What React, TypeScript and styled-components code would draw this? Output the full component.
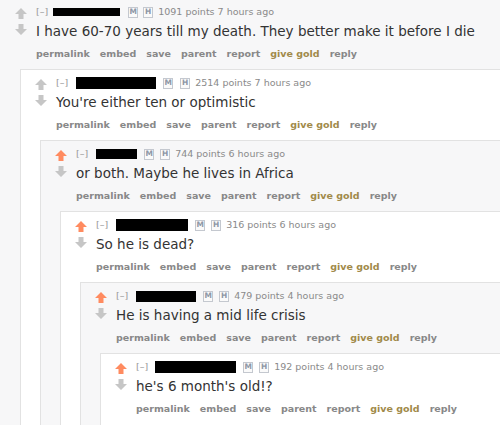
import React from 'react';
import styled, { createGlobalStyle } from 'styled-components';

const GlobalStyle = createGlobalStyle`
  html, body { margin: 0; padding: 0; background: #f7f7f8; overflow: hidden; }
  body { font-family: "DejaVu Sans", Verdana, sans-serif; }
`;

const Page = styled.div`
  width: 500px;
  height: 425px;
  overflow: hidden;
  background: #f7f7f8;
`;

const Box = styled.div<{ $depth: number }>`
  background: ${p => (p.$depth % 2 ? '#ffffff' : '#f7f7f8')};
  border: 1px solid #e2e2e2;
  border-right: none;
  border-left-color: ${p => (p.$depth === 0 ? 'transparent' : '#e2e2e2')};
  margin: ${p => (p.$depth === 0 ? '-2px 0 0 0' : '0 0 0 19px')};
  padding-bottom: 3px;
`;

const Entry = styled.div`
  display: flex;
  height: 70px;
`;

const ArrowCol = styled.div`
  width: 30px;
  padding-left: 5px;
  padding-top: 9px;
  display: flex;
  flex-direction: column;
  align-items: center;
  gap: 5px;
  flex: none;
`;

const Content = styled.div`
  display: flex;
  flex-direction: column;
  min-width: 0;
`;

const Tagline = styled.div`
  margin-top: 6px;
  height: 14px;
  line-height: 14px;
  display: flex;
  align-items: center;
  font-size: 9.5px;
  color: #8a8a8a;
  white-space: nowrap;
`;

const Expand = styled.span`
  color: #999;
`;

const Redact = styled.span<{ $w: number; $h: number; $ml: number }>`
  display: inline-block;
  background: #000;
  width: ${p => p.$w}px;
  height: ${p => p.$h}px;
  margin-left: ${p => p.$ml}px;
`;

const Badge = styled.span<{ $ml: number }>`
  box-sizing: border-box;
  display: inline-flex;
  align-items: center;
  justify-content: center;
  width: 10px;
  height: 11px;
  border: 1px solid #c4c8cf;
  background: #fafafa;
  color: #8e97a6;
  font-size: 7.5px;
  font-weight: bold;
  margin-left: ${p => p.$ml}px;
`;

const Points = styled.span`
  margin-left: 5px;
`;

const Body = styled.div`
  margin-top: 2px;
  height: 20px;
  line-height: 20px;
  font-size: 13.5px;
  color: #333;
  white-space: nowrap;
`;

const Buttons = styled.ul`
  list-style: none;
  margin: 7px 0 0 0;
  padding: 0;
  display: flex;
  gap: 10px;
  height: 12px;
  line-height: 12px;
  font-size: 9.5px;
  font-weight: bold;
  color: #888;
  white-space: nowrap;
`;

const Btn = styled.li<{ $gold?: boolean }>`
  color: ${p => (p.$gold ? '#a18a4a' : '#888')};
`;

const Arrow = ({ color, down }: { color: string; down?: boolean }) => (
  <svg width="12" height="11" viewBox="0 0 12 11" style={down ? { transform: 'rotate(180deg)' } : undefined}>
    <path d="M6 0 L12 6 L8.5 6 L8.5 11 L3.5 11 L3.5 6 L0 6 Z" fill={color} />
  </svg>
);

type C = {
  bar: [number, number, number];
  m: [number, number];
  points: number;
  time: string;
  text: string;
  up: boolean;
};

const comments: C[] = [
  { bar: [5, 67, 8], m: [8, 5], points: 1091, time: '7 hours ago', text: 'I have 60-70 years till my death. They better make it before I die', up: false },
  { bar: [8, 80, 12], m: [7, 7], points: 2514, time: '7 hours ago', text: "You're either ten or optimistic", up: false },
  { bar: [8, 41, 10], m: [7, 6], points: 744, time: '6 hours ago', text: 'or both. Maybe he lives in Africa', up: true },
  { bar: [8, 72, 12], m: [7, 6], points: 316, time: '6 hours ago', text: 'So he is dead?', up: true },
  { bar: [8, 60, 11], m: [7, 6], points: 479, time: '4 hours ago', text: 'He is having a mid life crisis', up: true },
  { bar: [7, 81, 12], m: [7, 6], points: 192, time: '4 hours ago', text: "he's 6 month's old!?", up: true },
];

const buttons = ['permalink', 'embed', 'save', 'parent', 'report', 'give gold', 'reply'];

const Comment = ({ depth }: { depth: number }) => {
  const c = comments[depth];
  if (!c) return null;
  return (
    <Box $depth={depth}>
      <Entry>
        <ArrowCol>
          <Arrow color={c.up ? '#ff8b60' : '#c6c6c6'} />
          <Arrow color="#c6c6c6" down />
        </ArrowCol>
        <Content>
          <Tagline>
            <Expand>[–]</Expand>
            <Redact $ml={c.bar[0]} $w={c.bar[1]} $h={c.bar[2]} />
            <Badge $ml={c.m[0]}>M</Badge>
            <Badge $ml={c.m[1]}>H</Badge>
            <Points>{c.points} points {c.time}</Points>
          </Tagline>
          <Body>{c.text}</Body>
          <Buttons>
            {buttons.map(b => (
              <Btn key={b} $gold={b === 'give gold'}>{b}</Btn>
            ))}
          </Buttons>
        </Content>
      </Entry>
      <Comment depth={depth + 1} />
    </Box>
  );
};

export default function App() {
  return (
    <Page>
      <GlobalStyle />
      <Comment depth={0} />
    </Page>
  );
}
